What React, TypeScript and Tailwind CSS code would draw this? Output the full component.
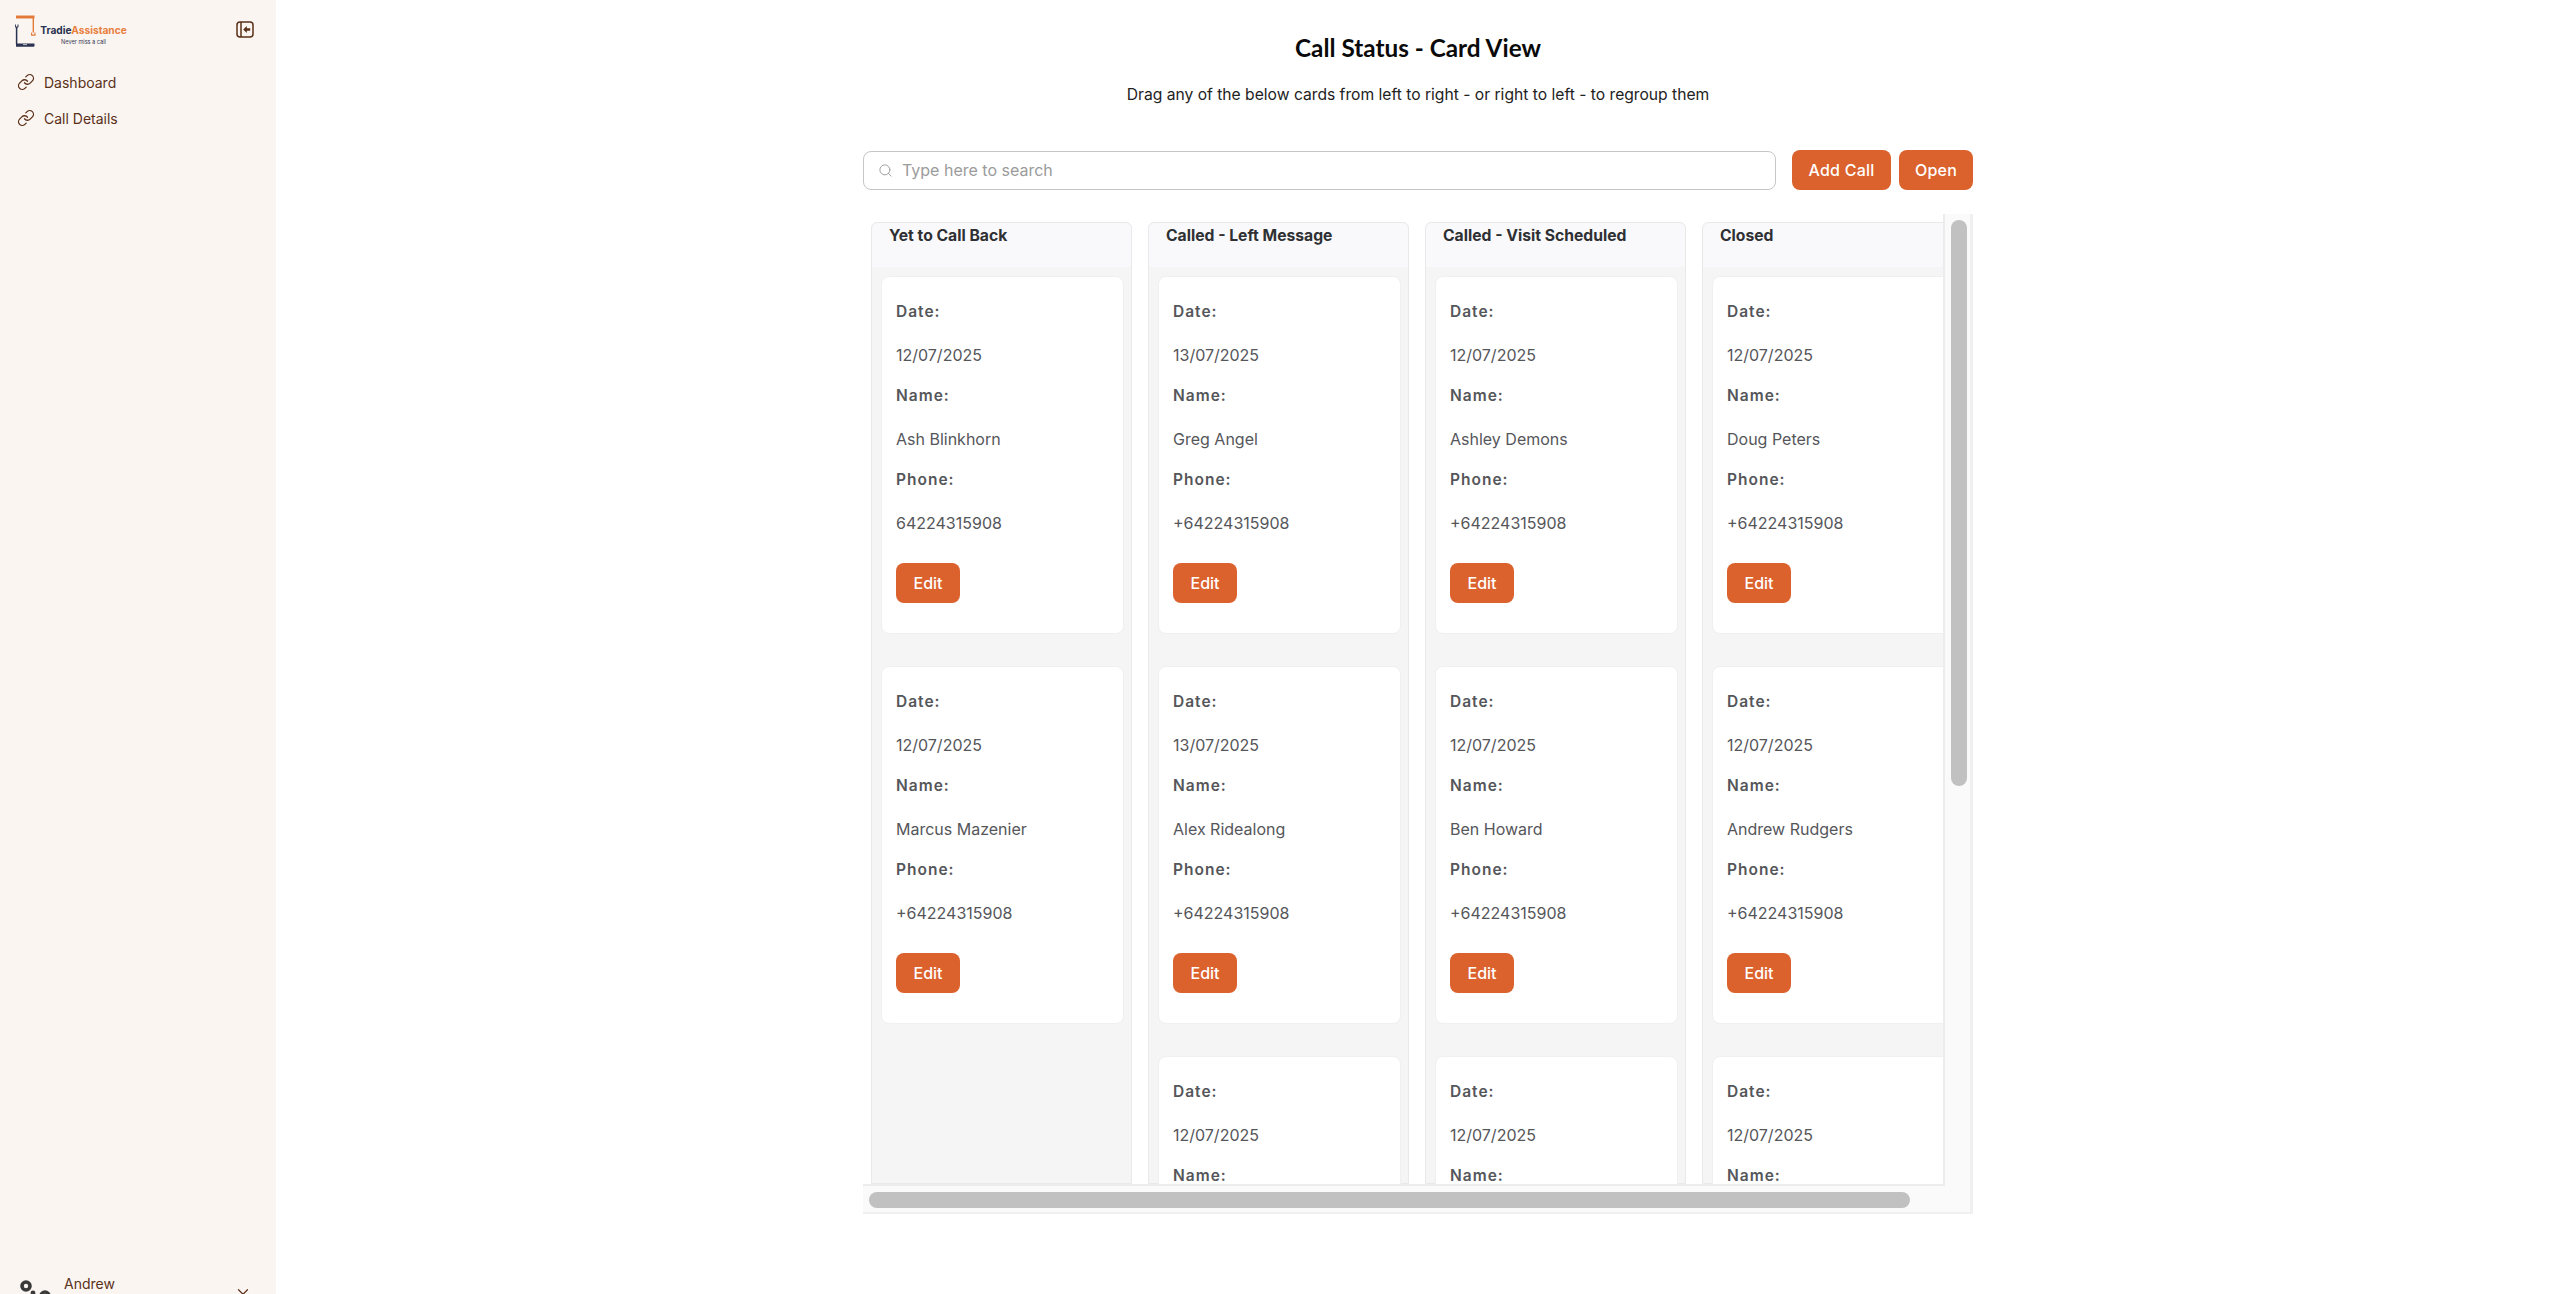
import { ChevronDown, Link, Search } from "lucide-react";

type CallCard = { date: string; name: string; phone: string };
type Column = { title: string; cards: CallCard[] };

const columns: Column[] = [
  {
    title: "Yet to Call Back",
    cards: [
      { date: "12/07/2025", name: "Ash Blinkhorn", phone: "64224315908" },
      { date: "12/07/2025", name: "Marcus Mazenier", phone: "+64224315908" },
    ],
  },
  {
    title: "Called - Left Message",
    cards: [
      { date: "13/07/2025", name: "Greg Angel", phone: "+64224315908" },
      { date: "13/07/2025", name: "Alex Ridealong", phone: "+64224315908" },
      { date: "12/07/2025", name: "", phone: "" },
    ],
  },
  {
    title: "Called - Visit Scheduled",
    cards: [
      { date: "12/07/2025", name: "Ashley Demons", phone: "+64224315908" },
      { date: "12/07/2025", name: "Ben Howard", phone: "+64224315908" },
      { date: "12/07/2025", name: "", phone: "" },
    ],
  },
  {
    title: "Closed",
    cards: [
      { date: "12/07/2025", name: "Doug Peters", phone: "+64224315908" },
      { date: "12/07/2025", name: "Andrew Rudgers", phone: "+64224315908" },
      { date: "12/07/2025", name: "", phone: "" },
    ],
  },
];

function Logo() {
  return (
    <div className="flex items-start">
      <svg width="22" height="34" viewBox="0 0 22 34" className="shrink-0">
        <path d="M1 1.5h18.5v3H1z" fill="#e27a3a" />
        <path d="M18.3 3v15.5" stroke="#e27a3a" strokeWidth="1.4" fill="none" />
        <path d="M16.6 18.5v2.6h3.4v-2.6" stroke="#e27a3a" strokeWidth="1.1" fill="none" />
        <path d="M1.6 13v17" stroke="#2a3350" strokeWidth="1.5" fill="none" />
        <path d="M0.4 10.5v2.6h2.6v-2.6" stroke="#2a3350" strokeWidth="1" fill="none" />
        <path d="M1 29.5h18.5v2.2a1 1 0 0 1-1 1H1z" fill="#2a3350" />
        <path d="M8 30.6h4" stroke="#ffffff" strokeWidth="0.7" />
      </svg>
      <div className="ml-[3px] mt-[9px] flex w-[87px] flex-col items-center">
        <p className="text-[10.2px] font-bold leading-[14px] whitespace-nowrap text-[#2a3350]">
          Tradie<span className="text-[#e8803f]">Assistance</span>
        </p>
        <p className="mt-[1px] text-[5.6px] leading-[8px] whitespace-nowrap text-[#333a52]">Never miss a call</p>
      </div>
    </div>
  );
}

function NavItem({ label }: { label: string }) {
  return (
    <a className="flex h-[36px] items-center text-[14px] text-[#5a3019]">
      <Link className="ml-[17px] mr-[9px]" size={18} strokeWidth={1.7} />
      {label}
    </a>
  );
}

function Card({ card }: { card: CallCard }) {
  return (
    <div className="mb-8 w-[243px] rounded-[8px] border border-[#f0f0f0] bg-white pl-[14px] pt-[22px] pb-[30px] text-[#55565a]">
      <p className="mb-[19px] pt-[1px] text-[15.5px] leading-6 font-semibold tracking-[1px]">Date:</p>
      <p className="mb-4 text-[16px] leading-6">{card.date}</p>
      <p className="mb-[19px] pt-[1px] text-[15.5px] leading-6 font-semibold tracking-[1px]">Name:</p>
      <p className="mb-4 text-[16px] leading-6">{card.name}</p>
      <p className="mb-[19px] pt-[1px] text-[15.5px] leading-6 font-semibold tracking-[1px]">Phone:</p>
      <p className="mb-7 text-[16px] leading-6">{card.phone}</p>
      <button className="h-10 w-[64px] rounded-[8px] bg-[#db612d] text-[16px] font-medium text-white">Edit</button>
    </div>
  );
}

function StatusColumn({ column }: { column: Column }) {
  return (
    <div className="w-[261px] shrink-0 rounded-t-[6px] border border-[#e9e9e9] bg-[#f5f5f5]">
      <div className="h-[44px] rounded-t-[6px] bg-[#f9f9fb] pl-[17px] pt-[1px] text-[15.7px] leading-6 font-bold text-[#2f3033]">
        {column.title}
      </div>
      <div className="pl-[9px] pt-[9px]">
        {column.cards.map((card, i) => (
          <Card key={i} card={card} />
        ))}
      </div>
    </div>
  );
}

export default function App() {
  return (
    <div className="flex h-screen overflow-hidden bg-white font-['Inter',sans-serif]">
      <aside className="flex h-full w-[276px] shrink-0 flex-col bg-[#fbf5f1]">
        <div className="flex items-start justify-between pl-[15px] pr-[22px] pt-[14px]">
          <Logo />
          <svg width="18" height="18" viewBox="0 0 18 18" className="mt-[7px] text-[#5a3019]">
            <rect x="1" y="1" width="16" height="15" rx="3" fill="none" stroke="currentColor" strokeWidth="1.5" />
            <path d="M5 1v15" stroke="currentColor" strokeWidth="1.5" />
            <path d="M7.2 8.5l3.6-3.6v2.4h3.4v2.4h-3.4v2.4z" fill="currentColor" />
          </svg>
        </div>
        <nav className="mt-[16px] flex flex-col">
          <NavItem label="Dashboard" />
          <NavItem label="Call Details" />
        </nav>
        <div className="mt-auto -mb-[10px] flex h-[30px] items-start pl-[20px] pr-[24px]">
          <svg width="34" height="30" viewBox="0 0 34 30" className="shrink-0 text-[#3a3a3a]">
            <circle cx="6" cy="12" r="4" fill="none" stroke="currentColor" strokeWidth="3.6" />
            <circle cx="13" cy="19" r="2.4" fill="currentColor" />
            <circle cx="25" cy="22" r="4" fill="none" stroke="currentColor" strokeWidth="3.6" />
          </svg>
          <p className="ml-[10px] flex-1 text-[14px] leading-5 text-[#5a3019]">Andrew</p>
          <ChevronDown className="mt-[9px] text-[#5a3019]" size={18} strokeWidth={1.6} />
        </div>
      </aside>

      <main className="flex-1 pl-1">
        <div className="mx-auto w-[1110px]">
          <h1 className="pt-[32px] text-center font-['Lato',sans-serif] text-[24.3px] leading-[32px] font-bold text-[#0a0a0a]">
            Call Status - Card View
          </h1>
          <p className="mt-[19px] text-center text-[15.65px] leading-6 text-[#222222]">
            Drag any of the below cards from left to right - or right to left - to regroup them
          </p>

          <div className="mt-[43px] flex items-center">
            <label className="flex h-[39px] w-[913px] items-center rounded-[8px] border-[1.5px] border-[#c6c6c6] pl-[14px]">
              <Search className="mr-[9px] text-[#9a9a9a]" size={15} strokeWidth={1.5} />
              <input
                placeholder="Type here to search"
                className="flex-1 bg-transparent text-[16px] outline-none placeholder:text-[#9b9b9b]"
              />
            </label>
            <button className="ml-4 h-10 w-[99px] rounded-[8px] bg-[#db612d] text-[16px] font-medium tracking-[0.25px] text-white">
              Add Call
            </button>
            <button className="ml-2 h-10 w-[74px] rounded-[8px] bg-[#db612d] text-[16px] font-medium tracking-[0.25px] text-white">
              Open
            </button>
          </div>

          <div className="mt-[24px] grid h-[1000px] grid-cols-[1fr_28px] grid-rows-[1fr_28px]">
            <div className="flex gap-4 overflow-hidden border-r-2 border-b-2 border-[#ececec] pl-2 pt-2">
              {columns.map((column) => (
                <StatusColumn key={column.title} column={column} />
              ))}
            </div>
            <div className="border-r-[3px] border-[#f0f0f0] bg-[#fafafa] pl-[6px] pt-[6px]">
              <div className="h-[566px] w-4 rounded-full bg-[#c1c1c1]" />
            </div>
            <div className="col-span-2 border-r-[3px] border-b-[2px] border-[#f0f0f0] bg-[#fafafa] pl-[6px] pt-[6px]">
              <div className="h-4 w-[1041px] rounded-full bg-[#c1c1c1]" />
            </div>
          </div>
        </div>
      </main>
    </div>
  );
}
